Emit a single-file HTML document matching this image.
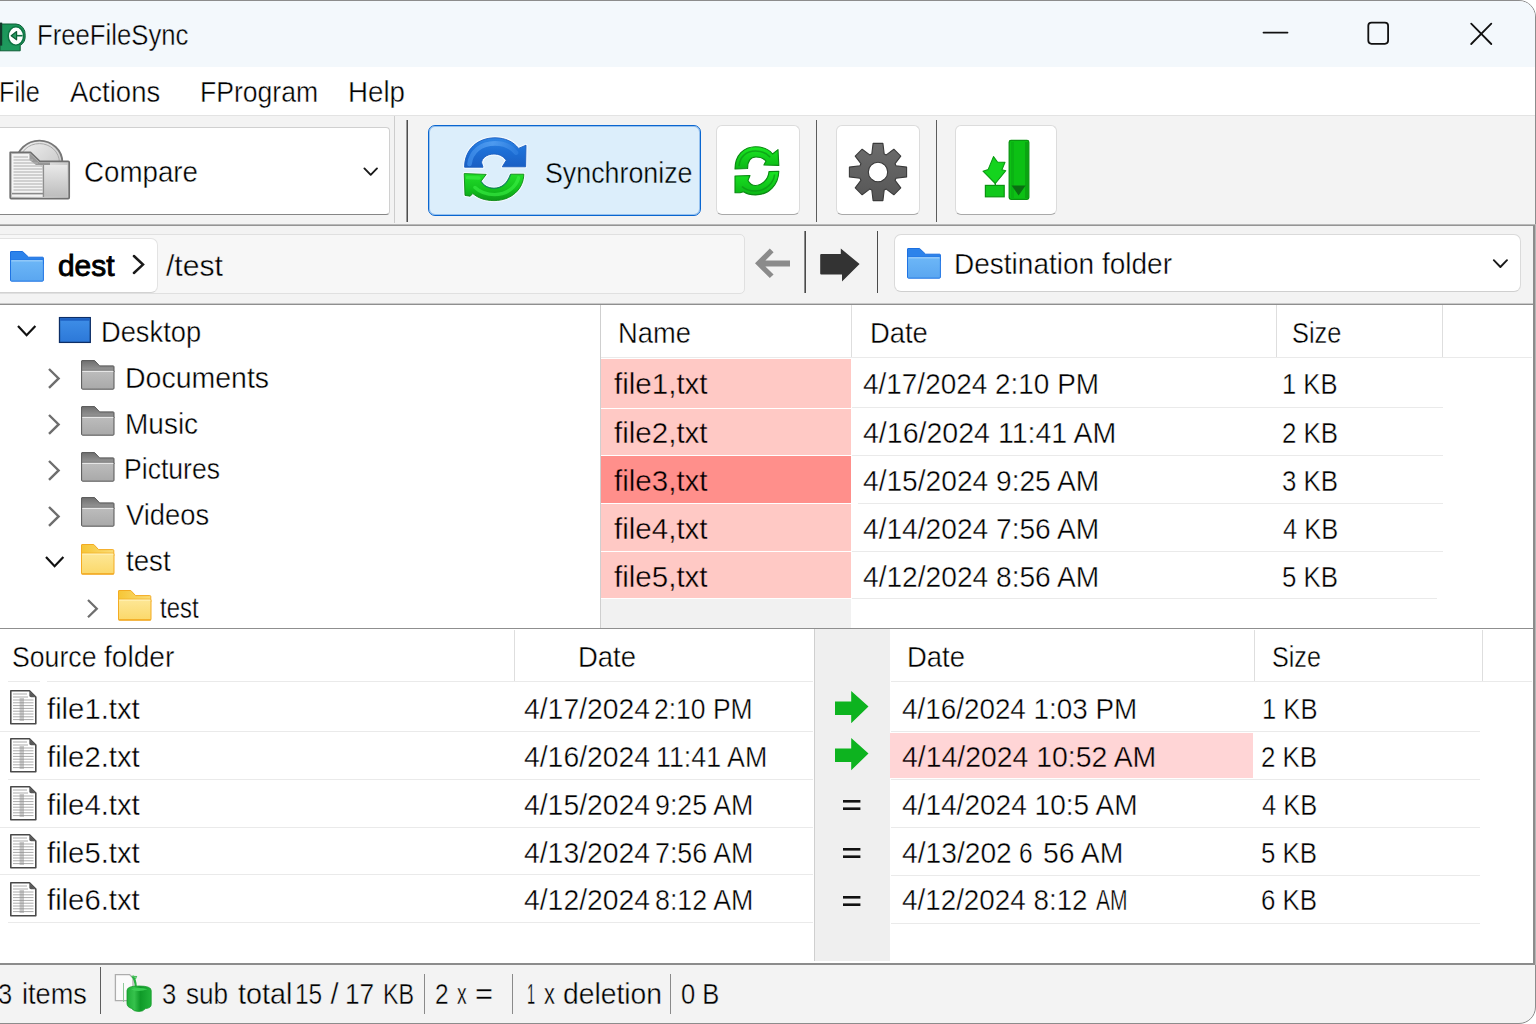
<!DOCTYPE html>
<html><head><meta charset="utf-8"><title>FreeFileSync</title>
<style>
html,body{margin:0;padding:0;}
body{width:1536px;height:1024px;overflow:hidden;position:relative;background:#fff;font-family:"Liberation Sans",sans-serif;color:#000;}
.a{position:absolute;}
.t{position:absolute;white-space:pre;line-height:1;transform-origin:0 0;font-family:"Liberation Sans",sans-serif;}
svg{position:absolute;overflow:visible;}
#win{left:-20px;top:0;width:1554px;height:1022px;border:1px solid #8c8c8c;border-radius:0 17px 17px 0;background:#f3f3f3;overflow:hidden;}
.btn{background:#fff;border:1px solid #dcdcdc;border-bottom-color:#a9a9a9;border-radius:6px;box-sizing:border-box;}
.hl{height:1px;background:#eaeaea;}
.vl{width:1px;background:#dedede;}

</style></head>
<body>
<div class="a" id="win"></div>
<!-- title bar -->
<div class="a" style="left:0;top:1px;width:1535px;height:66px;background:#f3f8fc;border-radius:0 16px 0 0;"></div>
<!-- app icon -->
<svg style="left:0;top:20px" width="30" height="34" viewBox="0 20 30 34">
  <defs><linearGradient id="gApp" x1="0" y1="0" x2="0" y2="1"><stop offset="0" stop-color="#1a9458"/><stop offset="1" stop-color="#1f9a5e"/></linearGradient></defs>
  <path d="M0 24 H16 A9.4 10.6 0 0 1 25.2 35.4 A9.4 10.6 0 0 1 20.2 45.4 V50.8 H0 Z" fill="url(#gApp)" stroke="#0c5c34" stroke-width="1"/>
  <rect x="0" y="22.6" width="2.2" height="23" fill="#12382a"/>
  <ellipse cx="15.9" cy="36" rx="7.7" ry="9.2" fill="#fff" stroke="#0e7443" stroke-width="1.5"/>
  <path d="M11.2 35.7 L16.6 31.6 V39.8 Z" fill="#2a9a62" stroke="#0c5c34" stroke-width="1.2" stroke-linejoin="round"/>
  <line x1="16.6" y1="35.7" x2="22.6" y2="35.7" stroke="#0e6e40" stroke-width="1.6"/>
</svg>
<!-- window controls -->
<svg style="left:1250px;top:10px" width="260" height="50" viewBox="1250 10 260 50" fill="none" stroke="#111" stroke-width="1.8" stroke-linecap="round">
  <line x1="1263.5" y1="32.6" x2="1287.5" y2="32.6"/>
  <rect x="1368.3" y="22.6" width="19.8" height="21.2" rx="3.2"/>
  <line x1="1471.2" y1="23.6" x2="1491.3" y2="44"/>
  <line x1="1491.3" y1="23.6" x2="1471.2" y2="44"/>
</svg>
<!-- menu bar -->
<div class="a" style="left:0;top:67px;width:1535px;height:48px;background:#fff;"></div>
<div class="a" style="left:0;top:115px;width:1535px;height:1px;background:#e3e3e3;"></div>
<!-- toolbar -->
<div class="a" style="left:0;top:116px;width:1535px;height:108px;background:#f3f3f3;"></div>
<div class="a" style="left:0;top:224px;width:1536px;height:1px;background:#b9b9b9;"></div>
<div class="a" style="left:0;top:225px;width:1536px;height:1px;background:#949494;"></div>
<!-- compare button -->
<div class="a btn" style="left:-8px;top:127px;width:398px;height:88px;border-color:#d0d0d0;border-bottom-color:#868686;border-radius:4px;"></div>
<svg style="left:360px;top:164px" width="22" height="16" viewBox="360 164 22 16" fill="none" stroke="#1a1a1a" stroke-width="1.9" stroke-linecap="round" stroke-linejoin="round"><path d="M364.4 168.4 L370.7 174.8 L377 168.4"/></svg>
<!-- separators -->
<div class="a" style="left:394px;top:116px;width:1px;height:107px;background:#cdcdcd;"></div>
<div class="a" style="left:406px;top:120px;width:1px;height:102px;background:#9a9a9a;"></div><div class="a" style="left:407px;top:120px;width:1px;height:102px;background:#4e4e4e;"></div>
<!-- synchronize button -->
<div class="a" style="left:428px;top:125px;width:273px;height:91px;box-sizing:border-box;border:1px solid #0a66d0;border-radius:7px;background:#dceefb;box-shadow:inset 0 0 0 1px rgba(20,110,215,.35);"></div>
<!-- refresh / gear / green buttons -->
<div class="a btn" style="left:716px;top:125px;width:84px;height:90px;"></div>
<div class="a" style="left:816px;top:120px;width:1px;height:102px;background:#5c5c5c;"></div>
<div class="a btn" style="left:836px;top:125px;width:84px;height:90px;"></div>
<div class="a" style="left:936px;top:120px;width:1px;height:102px;background:#5c5c5c;"></div>
<div class="a btn" style="left:955px;top:125px;width:102px;height:90px;"></div>
<!-- address bar -->
<div class="a" style="left:0;top:226px;width:1533px;height:78px;background:#f3f3f3;"></div>
<div class="a" style="left:0;top:303px;width:1533px;height:1px;background:#c9c9c9;"></div>
<div class="a" style="left:0;top:304px;width:1533px;height:1px;background:#8f8f8f;"></div>
<div class="a" style="left:-8px;top:234px;width:753px;height:60px;box-sizing:border-box;border:1px solid #e0e0e0;border-radius:5px;background:#f7f7f7;"></div>
<div class="a" style="left:-8px;top:238px;width:166px;height:55px;box-sizing:border-box;border:1px solid #e3e3e3;border-bottom-color:#d2d2d2;border-radius:7px;background:#fff;"></div>
<svg style="left:128px;top:250px" width="22" height="30" viewBox="128 250 22 30" fill="none" stroke="#1a1a1a" stroke-width="2.5" stroke-linecap="round" stroke-linejoin="miter"><path d="M133.9 256 L143 264.6 L133.9 273"/></svg>
<div class="a" style="left:804px;top:231px;width:1px;height:62px;background:#8a8a8a;"></div><div class="a" style="left:805px;top:231px;width:1px;height:62px;background:#4a4a4a;"></div>
<div class="a" style="left:877px;top:231px;width:1px;height:62px;background:#4a4a4a;"></div>
<svg style="left:750px;top:244px" width="115" height="42" viewBox="750 244 115 42">
  <path d="M755 263.3 L769.8 248.6 L773.6 252.3 L765.4 260.4 H790 V266.4 H765.4 L773.6 274.4 L769.8 278.1 Z" fill="#8b8b8b"/>
  <path d="M821.2 254 H840.8 V248.6 L859.6 264 L842 281.6 V274.6 H821.2 Q820.2 274.6 820.2 273.6 V255 Q820.2 254 821.2 254 Z" fill="#333"/>
</svg>
<div class="a" style="left:894px;top:234px;width:627px;height:58px;box-sizing:border-box;border:1px solid #dadada;border-bottom-color:#cfcfcf;border-radius:7px;background:#fff;"></div>
<svg style="left:1488px;top:254px" width="26" height="20" viewBox="1488 254 26 20" fill="none" stroke="#1a1a1a" stroke-width="1.9" stroke-linecap="round" stroke-linejoin="round"><path d="M1493.8 260.2 L1500.4 267 L1507 260.2"/></svg>
<!-- top panels -->
<div class="a" style="left:0;top:305px;width:1533px;height:323px;background:#fff;"></div>
<div class="a" style="left:0;top:628px;width:1533px;height:1px;background:#8f8f8f;"></div>
<div class="a" style="left:600px;top:305px;width:1px;height:323px;background:#cfcfcf;"></div>
<!-- top list header -->
<div class="a hl" style="left:601px;top:357px;width:931px;"></div>
<div class="a vl" style="left:851px;top:305px;height:52px;"></div>
<div class="a vl" style="left:1276px;top:305px;height:52px;"></div>
<div class="a vl" style="left:1442px;top:305px;height:52px;"></div>
<!-- pink rows -->
<div class="a" style="left:601px;top:359px;width:250px;height:49px;background:#ffc9c5;"></div>
<div class="a" style="left:601px;top:409px;width:250px;height:46px;background:#ffc9c5;"></div>
<div class="a" style="left:601px;top:456px;width:250px;height:47px;background:#ff8f8b;"></div>
<div class="a" style="left:601px;top:504px;width:250px;height:47px;background:#ffc9c5;"></div>
<div class="a" style="left:601px;top:552px;width:250px;height:46px;background:#ffc9c5;"></div>
<div class="a" style="left:601px;top:599px;width:250px;height:29px;background:#f1f1f1;"></div>
<!-- top row lines -->
<div class="a hl" style="left:852px;top:407px;width:591px;"></div>
<div class="a hl" style="left:852px;top:455px;width:591px;"></div>
<div class="a hl" style="left:858px;top:503px;width:585px;"></div>
<div class="a hl" style="left:852px;top:551px;width:591px;"></div>
<div class="a hl" style="left:852px;top:598px;width:585px;"></div>
<!-- bottom panels -->
<div class="a" style="left:0;top:629px;width:1533px;height:334px;background:#fff;"></div>
<div class="a" style="left:0;top:963px;width:1535px;height:2px;background:#8c8c8c;"></div>
<div class="a hl" style="left:8px;top:681px;width:32px;"></div>
<div class="a hl" style="left:47px;top:681px;width:766px;"></div>
<div class="a hl" style="left:891px;top:681px;width:641px;"></div>
<div class="a vl" style="left:514px;top:630px;height:51px;"></div>
<div class="a vl" style="left:1254px;top:630px;height:51px;"></div>
<div class="a vl" style="left:1482px;top:630px;height:51px;"></div>
<!-- middle column -->
<div class="a" style="left:814px;top:629px;width:76px;height:332px;background:#efefef;border-left:1px solid #cfcfcf;box-sizing:border-box;"></div>
<!-- bottom row lines -->
<div class="a hl" style="left:0;top:731px;width:813px;"></div>
<div class="a hl" style="left:8px;top:779px;width:805px;"></div>
<div class="a hl" style="left:0;top:827px;width:813px;"></div>
<div class="a hl" style="left:0;top:874px;width:813px;"></div>
<div class="a hl" style="left:8px;top:922px;width:805px;"></div>
<div class="a hl" style="left:891px;top:731px;width:589px;"></div>
<div class="a hl" style="left:891px;top:779px;width:589px;"></div>
<div class="a hl" style="left:891px;top:827px;width:589px;"></div>
<div class="a hl" style="left:891px;top:875px;width:589px;"></div>
<div class="a hl" style="left:891px;top:923px;width:589px;"></div>
<!-- pink highlight -->
<div class="a" style="left:890px;top:733px;width:363px;height:45px;background:#ffd5d6;"></div>
<!-- panel right border -->
<div class="a" style="left:1533px;top:225px;width:2px;height:740px;background:#8c8c8c;"></div>
<div class="a" style="left:1535px;top:225px;width:1px;height:740px;background:#b5b5b5;"></div>
<!-- status separators -->
<div class="a" style="left:100px;top:967px;width:1px;height:47px;background:#5e5e5e;"></div>
<div class="a" style="left:424px;top:974px;width:1px;height:40px;background:#8a8a8a;"></div>
<div class="a" style="left:512px;top:974px;width:1px;height:40px;background:#8a8a8a;"></div>
<div class="a" style="left:670px;top:974px;width:1px;height:40px;background:#8a8a8a;"></div>
<svg width="0" height="0" style="left:0;top:0">
<defs>
  <linearGradient id="gGrayV" x1="0" y1="0" x2="0" y2="1"><stop offset="0" stop-color="#e9e9e9"/><stop offset="1" stop-color="#bdbdbd"/></linearGradient>
  <linearGradient id="gGrayH" x1="0" y1="0" x2="1" y2="0"><stop offset="0" stop-color="#c4c4c4"/><stop offset=".6" stop-color="#dedede"/><stop offset="1" stop-color="#c9c9c9"/></linearGradient>
  <linearGradient id="gDome" x1="0" y1="0" x2="1" y2="1"><stop offset="0" stop-color="#f4f4f4"/><stop offset="1" stop-color="#bdbdbd"/></linearGradient>
  <linearGradient id="gBlueA" x1="0" y1="0" x2="0" y2="1"><stop offset="0" stop-color="#2f86e6"/><stop offset=".45" stop-color="#1d6fd6"/><stop offset="1" stop-color="#1a5fc4"/></linearGradient>
  <linearGradient id="gGreenA" x1="0" y1="0" x2="0" y2="1"><stop offset="0" stop-color="#22dd2a"/><stop offset=".55" stop-color="#14c41e"/><stop offset="1" stop-color="#0d9a18"/></linearGradient>
  <linearGradient id="gGreenB" x1="0" y1="0" x2="0" y2="1"><stop offset="0" stop-color="#1ae622"/><stop offset="1" stop-color="#0cb616"/></linearGradient>
  <linearGradient id="gGear" x1="0" y1="0" x2="0" y2="1"><stop offset="0" stop-color="#6c6c6c"/><stop offset="1" stop-color="#565656"/></linearGradient>
  <linearGradient id="gFoldBlue" x1="0" y1="0" x2="0" y2="1"><stop offset="0" stop-color="#6db7f7"/><stop offset="1" stop-color="#5aa6f0"/></linearGradient>
  <linearGradient id="gDesk" x1="0" y1="0" x2="0" y2="1"><stop offset="0" stop-color="#3f8fe8"/><stop offset="1" stop-color="#2c78d8"/></linearGradient>
  <linearGradient id="gFoldGrayBack" x1="0" y1="0" x2="0" y2="1"><stop offset="0" stop-color="#6f6f6f"/><stop offset="1" stop-color="#9c9c9c"/></linearGradient>
  <linearGradient id="gFoldGray" x1="0" y1="0" x2="0" y2="1"><stop offset="0" stop-color="#bdbdbd"/><stop offset="1" stop-color="#a9a9a9"/></linearGradient>
  <linearGradient id="gYelBack" x1="0" y1="0" x2="1" y2="0"><stop offset="0" stop-color="#f6c636"/><stop offset="1" stop-color="#fbdd78"/></linearGradient>
  <linearGradient id="gFoldYel" x1="0" y1="0" x2="0" y2="1"><stop offset="0" stop-color="#fde796"/><stop offset="1" stop-color="#fbd86a"/></linearGradient>
  <linearGradient id="gCube" x1="0" y1="0" x2="1" y2="0"><stop offset="0" stop-color="#1fae38"/><stop offset=".3" stop-color="#36c24c"/><stop offset=".55" stop-color="#0f9a28"/><stop offset="1" stop-color="#22b23a"/></linearGradient>

  <!-- gray folder 34x30 at origin -->
  <g id="fgray">
    <path d="M1 .6 H13.6 L18.6 5.9 H32.2 Q33 5.9 33 6.7 V12 H.6 V1 Q.6 .6 1 .6 Z" fill="url(#gFoldGrayBack)" stroke="#555" stroke-width="1"/>
    <rect x=".6" y="10.4" width="32.4" height="18.8" rx="1" fill="url(#gFoldGray)" stroke="#555" stroke-width="1"/>
    <rect x="1.3" y="10.6" width="31" height="1.4" fill="#e6e6e6"/>
  </g>
  <!-- yellow folder 34x31 -->
  <g id="fyel">
    <path d="M1 .5 H12.8 L17.6 5.6 H31.8 Q32.8 5.6 32.8 6.6 V12 H.5 V1 Q.5 .5 1 .5 Z" fill="url(#gYelBack)" stroke="#f3ab22" stroke-width="1"/>
    <rect x=".5" y="9.2" width="32.5" height="20.9" rx="1" fill="url(#gFoldYel)" stroke="#f3ab22" stroke-width="1"/>
    <rect x="1.2" y="9.5" width="31.1" height="1.3" fill="#fff1b4"/>
    <rect x=".6" y="29.4" width="32.3" height="1.1" fill="#f0a216"/>
  </g>
  <!-- blue folder 34x31 -->
  <g id="fblue">
    <path d="M1 .5 H12.6 L18.6 6.2 H32.6 Q33.4 6.2 33.4 7 V13 H.5 V1 Q.5 .5 1 .5 Z" fill="#2d83ea" stroke="#1b6fe0" stroke-width="1"/>
    <rect x=".5" y="8.8" width="32.9" height="21.4" rx="1" fill="url(#gFoldBlue)" stroke="#1f74e4" stroke-width="1"/>
    <rect x="1.3" y="9.2" width="31.3" height="1.2" fill="#9fd0fb"/>
  </g>
  <!-- doc icon 27x35 -->
  <g id="doc">
    <path d="M.8 .8 H19.5 L25.8 7 V33.8 H.8 Z" fill="#fff" stroke="#4a4a4a" stroke-width="1.6" stroke-linejoin="round"/>
    <path d="M19.3 .9 L25.8 7.2 H21 Q19.3 7.2 19.3 5.6 Z" fill="#5a5a5a"/>
    <g stroke="#ababab" stroke-width="1">
      <line x1="3" y1="4" x2="17" y2="4"/><line x1="3" y1="7" x2="18" y2="7"/><line x1="3" y1="10" x2="23.5" y2="10"/><line x1="3" y1="12.8" x2="23.5" y2="12.8"/>
      <line x1="3" y1="15.6" x2="23.5" y2="15.6"/><line x1="3" y1="18.4" x2="23.5" y2="18.4"/><line x1="3" y1="21.2" x2="23.5" y2="21.2"/><line x1="3" y1="24" x2="23.5" y2="24"/>
      <line x1="3" y1="26.8" x2="23.5" y2="26.8"/><line x1="3" y1="29.6" x2="23.5" y2="29.6"/>
    </g>
    <rect x="9.6" y="8" width="4.4" height="23" fill="#8a8a8a" opacity=".45"/>
  </g>
  <!-- chevrons -->
  <path id="chR" d="M0 0 L9.6 9.4 L0 18.8" fill="none" stroke="#6e6e6e" stroke-width="2.4" stroke-linejoin="miter"/>
  <path id="chD" d="M0 0 L8.6 9.2 L17.4 0" fill="none" stroke="#111" stroke-width="2.2" stroke-linejoin="miter"/>
  <!-- green arrow 34x32 -->
  <path id="garr" d="M0 10.5 H16.2 V0 L33.5 15.6 L16.2 32.2 V24 H0 Z" fill="#0db31f"/>
  <g id="eq"><rect x="0" y="0" width="17.4" height="2.6" fill="#111"/><rect x="0" y="7.4" width="17.4" height="2.6" fill="#111"/></g>
</defs>
</svg>

<!-- Compare icon -->
<svg style="left:6px;top:136px" width="70" height="68" viewBox="6 136 70 68">
  <ellipse cx="39.4" cy="162.4" rx="23" ry="21.8" fill="url(#gDome)" stroke="#777" stroke-width="1.8"/>
  <ellipse cx="39.4" cy="162.4" rx="20" ry="18.8" fill="none" stroke="#a8a8a8" stroke-width="1"/>
  <path d="M10.2 152.4 H30.5 L39.8 161.4 H68.2 Q69.2 161.4 69.2 162.4 V197.6 Q69.2 198.6 68.2 198.6 H11.2 Q10.2 198.6 10.2 197.6 Z" fill="url(#gGrayH)" stroke="#707070" stroke-width="1.7" stroke-linejoin="round"/>
  <path d="M12 154 H29 L35 160 L38 163.5 Q43 166 43 172 V196.8 H12 Z" fill="#f4f4f4"/>
  <path d="M29.5 153.2 L39.2 162.4 H50 V165 H36 L29.5 160 Z" fill="#8a8a8a" opacity=".85"/>
  <path d="M43.6 165 H67.4 V196.8 H43.6 Z" fill="url(#gGrayV)"/>
  <g stroke="#b3b3b3" stroke-width="1.1">
    <line x1="13.5" y1="157" x2="28" y2="157"/><line x1="13.5" y1="160" x2="33" y2="160"/><line x1="13.5" y1="163" x2="38" y2="163"/><line x1="13.5" y1="166" x2="42" y2="166"/>
    <line x1="13.5" y1="169" x2="42.5" y2="169"/><line x1="13.5" y1="172" x2="42.5" y2="172"/><line x1="13.5" y1="175" x2="42.5" y2="175"/><line x1="13.5" y1="178" x2="42.5" y2="178"/>
    <line x1="13.5" y1="181" x2="42.5" y2="181"/><line x1="13.5" y1="184" x2="42.5" y2="184"/><line x1="13.5" y1="187" x2="42.5" y2="187"/><line x1="13.5" y1="190" x2="42.5" y2="190"/>
  </g>
  <line x1="12" y1="193.6" x2="43" y2="193.6" stroke="#8a8a8a" stroke-width="1.6"/>
  <line x1="43.4" y1="165" x2="43.4" y2="197" stroke="#8f8f8f" stroke-width="1.4"/>
</svg>

<!-- Synchronize icon -->
<svg style="left:450px;top:125px" width="96" height="90" viewBox="0 0 96 90">
  <defs>
    <path id="sBlue" d="M14.6 42.2 C14.6 24 28 12.8 45 12.8 C55.5 12.8 63.5 17 68.6 23.4 L76 20.2 L75.6 41.8 H52.3 L56.3 35.2 C53 31 49 29 44 29 C36.5 29 31.6 33.5 31.6 37.8 L33 42.2 Z"/>
    <path id="sGreen" d="M14.2 48.6 L36.2 49.4 L31 56.3 C33.5 60.5 38 63.3 44 63.3 C52 63.3 57.6 58 60.6 49.2 H73.8 C73.6 64 61.5 75.6 44 75.6 C35 75.6 28 73 22.8 68.5 L20.2 71.2 L15 70.4 Z"/>
    <linearGradient id="gBlueHi" x1="0" y1="0" x2="1" y2="0"><stop offset="0" stop-color="#3f8eea"/><stop offset=".5" stop-color="#5aa4f4"/><stop offset="1" stop-color="#2f7fe0"/></linearGradient>
  </defs>
  <use href="#sBlue" fill="none" stroke="#f4faff" stroke-width="3" stroke-linejoin="round"/>
  <use href="#sGreen" fill="none" stroke="#f4faff" stroke-width="3" stroke-linejoin="round"/>
  <use href="#sBlue" fill="url(#gBlueA)" stroke="#1a5ec0" stroke-width=".9" stroke-linejoin="round"/>
  <path d="M19.5 39 C21 26.5 31 18.4 45 18.4 C54 18.4 61.5 22 66 27.6" fill="none" stroke="url(#gBlueHi)" stroke-width="4.6" opacity=".75" stroke-linecap="round"/>
  <use href="#sGreen" fill="url(#gGreenA)" stroke="#0c8a16" stroke-width=".9" stroke-linejoin="round"/>
  <path d="M17.5 52.6 L29 53 M25 62.5 C30.5 67.6 37 69.6 44.5 69.6 C57 69.6 66.2 62 68.6 52.8" fill="none" stroke="#3cf046" stroke-width="3.4" opacity=".6" stroke-linecap="round"/>
  <path d="M31 56.3 C33.5 60.5 38 63.3 44 63.3 C52 63.3 57.6 58 60.6 49.2" fill="none" stroke="#0a7a8a" stroke-width="1.2" opacity=".55"/>
</svg>

<!-- Refresh icon -->
<svg style="left:712px;top:125px" width="96" height="90" viewBox="0 0 96 90">
  <path d="M23 44 C23 30 32 21.8 43.5 21.8 C51 21.8 57 24.6 60.6 29 L66 24.6 L66.8 40.4 L51.9 40 L54 36 C51.6 33.2 48 32 44 32 C38.6 32 35.6 36.5 35.6 43.5 Z" fill="url(#gGreenB)" stroke="#0a8a12" stroke-width="1.1" stroke-linejoin="round"/>
  <path d="M27 41 C28 31.5 34.5 26 43.5 26 C50 26 55 28.4 58.2 32.2" fill="none" stroke="#0c9416" stroke-width="1.6" opacity=".7"/>
  <path d="M23 51 L38 50.5 L36 55.4 C37.6 58.6 40 60.5 43.5 60.5 C49.5 60.5 56.4 55 57 46.6 L66.8 46.2 C66.6 59.5 57 69.9 43.5 69.9 C38.5 69.9 34.6 68.8 31.6 66.8 L28 67.7 H23 Z" fill="url(#gGreenB)" stroke="#0a8a12" stroke-width="1.1" stroke-linejoin="round"/>
  <path d="M30 61.5 C33.5 65 38 66 43.5 66 C54 66 61.6 58 62.6 49.5" fill="none" stroke="#0c9416" stroke-width="1.6" opacity=".7"/>
</svg>

<!-- Gear icon -->
<svg style="left:844.2px;top:137.6px" width="68" height="68" viewBox="-34 -34 68 68">
  <path fill="url(#gGear)" stroke="#3a3a3a" stroke-width="1.1" stroke-linejoin="round" fill-rule="evenodd" d="M-6.20 -17.96 L-4.90 -28.60 L4.90 -28.60 L6.20 -17.96 A19.0 19.0 0 0 1 8.32 -17.08 L15.84 -22.77 L22.77 -15.84 L17.08 -8.32 A19.0 19.0 0 0 1 17.96 -6.20 L28.60 -4.90 L28.60 4.90 L17.96 6.20 A19.0 19.0 0 0 1 17.08 8.32 L22.77 15.84 L15.84 22.77 L8.32 17.08 A19.0 19.0 0 0 1 6.20 17.96 L4.90 28.60 L-4.90 28.60 L-6.20 17.96 A19.0 19.0 0 0 1 -8.32 17.08 L-15.84 22.77 L-22.77 15.84 L-17.08 8.32 A19.0 19.0 0 0 1 -17.96 6.20 L-28.60 4.90 L-28.60 -4.90 L-17.96 -6.20 A19.0 19.0 0 0 1 -17.08 -8.32 L-22.77 -15.84 L-15.84 -22.77 L-8.32 -17.08 A19.0 19.0 0 0 1 -6.20 -17.96 Z M9.7 0 A9.7 9.7 0 1 0 -9.7 0 A9.7 9.7 0 1 0 9.7 0 Z"/>
</svg>

<!-- Green bar icon -->
<svg style="left:950px;top:125px" width="112" height="90" viewBox="0 0 112 90">
  <rect x="59.2" y="15.4" width="19.6" height="59" rx="1.8" fill="#0cc014" stroke="#0a9410" stroke-width="1.3"/>
  <rect x="61" y="17" width="3" height="56" fill="#0aa812" opacity=".6"/>
  <rect x="75" y="17" width="3" height="56" fill="#0a9a10" opacity=".7"/>
  <path d="M61.6 60.6 H75.6 L68.6 70.4 Z" fill="#0a6e12"/>
  <rect x="35.4" y="60.4" width="18.8" height="11.4" fill="#12c81c" stroke="#0a9410" stroke-width="1.2"/>
  <path d="M43.5 31.6 L47.5 37 L55 37.4 L51.9 44.8 L55.8 45.7 L45.3 58.5 L33 46.2 L38.2 44.4 Z" fill="#14d41e" stroke="#0a9a12" stroke-width="1.1" stroke-linejoin="round"/>
  <line x1="45.3" y1="58" x2="45.3" y2="61" stroke="#0a9a12" stroke-width="1.4"/>
</svg>

<!-- blue folders -->
<svg style="left:9.6px;top:250.6px" width="34" height="31" viewBox="0 0 34 31"><use href="#fblue"/></svg>
<svg style="left:907px;top:247.8px" width="34" height="31" viewBox="0 0 34 31"><use href="#fblue"/></svg>

<!-- Desktop icon -->
<svg style="left:58px;top:316px" width="34" height="28" viewBox="58 316 34 28">
  <rect x="59.5" y="317.6" width="30.8" height="24.8" fill="url(#gDesk)" stroke="#0d2e66" stroke-width="1.3"/>
  <rect x="60.2" y="318.3" width="29.4" height="2.4" fill="#1d5fc0"/>
</svg>

<!-- tree chevrons -->
<svg style="left:17.6px;top:325.6px" width="18" height="11"><use href="#chD"/></svg>
<svg style="left:48.6px;top:369.4px" width="11" height="20"><use href="#chR"/></svg>
<svg style="left:48.6px;top:415.2px" width="11" height="20"><use href="#chR"/></svg>
<svg style="left:48.6px;top:461px" width="11" height="20"><use href="#chR"/></svg>
<svg style="left:48.6px;top:506.8px" width="11" height="20"><use href="#chR"/></svg>
<svg style="left:46px;top:556.6px" width="18" height="11"><use href="#chD"/></svg>
<svg style="left:88px;top:600.2px" width="11" height="20"><use href="#chR" stroke="#8a8a8a" transform="scale(.92)"/></svg>

<!-- gray folders -->
<svg style="left:80.6px;top:360px" width="34" height="30"><use href="#fgray"/></svg>
<svg style="left:80.6px;top:405.8px" width="34" height="30"><use href="#fgray"/></svg>
<svg style="left:80.6px;top:451.6px" width="34" height="30"><use href="#fgray"/></svg>
<svg style="left:80.6px;top:497.4px" width="34" height="30"><use href="#fgray"/></svg>
<!-- yellow folders -->
<svg style="left:80.6px;top:543.6px" width="34" height="31"><use href="#fyel"/></svg>
<svg style="left:118px;top:590px" width="34" height="31"><use href="#fyel"/></svg>

<!-- doc icons -->
<svg style="left:10px;top:690px" width="27" height="35"><use href="#doc"/></svg>
<svg style="left:10px;top:738px" width="27" height="35"><use href="#doc"/></svg>
<svg style="left:10px;top:786px" width="27" height="35"><use href="#doc"/></svg>
<svg style="left:10px;top:834px" width="27" height="35"><use href="#doc"/></svg>
<svg style="left:10px;top:882px" width="27" height="35"><use href="#doc"/></svg>

<!-- green arrows / equals -->
<svg style="left:835px;top:690.7px" width="34" height="33"><use href="#garr"/></svg>
<svg style="left:835px;top:738.3px" width="34" height="33"><use href="#garr"/></svg>
<svg style="left:843px;top:800.2px" width="18" height="11"><use href="#eq"/></svg>
<svg style="left:843px;top:848.2px" width="18" height="11"><use href="#eq"/></svg>
<svg style="left:843px;top:896.2px" width="18" height="11"><use href="#eq"/></svg>

<!-- status icon -->
<svg style="left:112px;top:970px" width="44" height="46" viewBox="112 970 44 46">
  <path d="M115.4 974.6 H129.6 L133 978 V1000.6 H115.4 Z" fill="#fbfbfb" stroke="#adadad" stroke-width="1.3"/>
  <path d="M123.5 983 V1002" stroke="#8fc99a" stroke-width="1" fill="none"/>
  <path d="M132.4 976 Q135.6 980 135.8 987" fill="none" stroke="#27b03e" stroke-width="2.2"/>
  <path d="M131.5 976.4 L136.4 976.6 L135.4 979" fill="none" stroke="#4cc060" stroke-width="1.2"/>
  <path d="M127 990.5 Q127 986 138.8 986 Q151.2 986 151.2 990.5 V1004.5 Q151.2 1008 145.5 1008.6 Q143 1011.6 138.8 1011.4 Q134 1011.6 131.5 1008.4 Q127 1007 127 1003.5 Z" fill="url(#gCube)" stroke="#139a2a" stroke-width=".8"/>
  <path d="M131 989.4 Q138.5 986.8 147.5 989.2 Q139 992.6 131 989.4 Z" fill="#3fd058" opacity=".9"/>
</svg>


<!-- text -->
<span class="t" style="left:37.03px;top:20.70px;font-size:29px;transform:scaleX(0.8864);-webkit-text-stroke:0.4px #f3f8fc;">FreeFileSync</span>
<span class="t" style="left:-1.04px;top:77.70px;font-size:29px;transform:scaleX(0.8716);-webkit-text-stroke:0.4px #fff;">File</span>
<span class="t" style="left:70.30px;top:77.70px;font-size:29px;transform:scaleX(0.9482);-webkit-text-stroke:0.4px #fff;">Actions</span>
<span class="t" style="left:200.17px;top:77.70px;font-size:29px;transform:scaleX(0.9161);-webkit-text-stroke:0.4px #fff;">FProgram</span>
<span class="t" style="left:348.09px;top:77.70px;font-size:29px;transform:scaleX(0.9555);-webkit-text-stroke:0.4px #fff;">Help</span>
<span class="t" style="left:84.34px;top:157.70px;font-size:29px;transform:scaleX(0.9552);-webkit-text-stroke:0.4px #fff;">Compare</span>
<span class="t" style="left:545.48px;top:158.70px;font-size:29px;transform:scaleX(0.9241);-webkit-text-stroke:0.4px #dceefb;">Synchronize</span>
<span class="t" style="left:58.07px;top:251.70px;font-size:29px;transform:scaleX(1.0306);-webkit-text-stroke:0.85px #000;">dest</span>
<span class="t" style="left:165.70px;top:251.70px;font-size:29px;transform:scaleX(1.0394);-webkit-text-stroke:0.4px #f7f7f7;">/test</span>
<span class="t" style="left:953.57px;top:249.70px;font-size:29px;transform:scaleX(0.9660);-webkit-text-stroke:0.4px #fff;">Destination folder</span>
<span class="t" style="left:100.92px;top:317.70px;font-size:29px;transform:scaleX(0.9404);-webkit-text-stroke:0.4px #fff;">Desktop</span>
<span class="t" style="left:124.74px;top:363.70px;font-size:29px;transform:scaleX(0.9822);-webkit-text-stroke:0.4px #fff;">Documents</span>
<span class="t" style="left:124.87px;top:409.70px;font-size:29px;transform:scaleX(0.9655);-webkit-text-stroke:0.4px #fff;">Music</span>
<span class="t" style="left:124.47px;top:454.70px;font-size:29px;transform:scaleX(0.9163);-webkit-text-stroke:0.4px #fff;">Pictures</span>
<span class="t" style="left:125.50px;top:500.70px;font-size:29px;transform:scaleX(0.9436);-webkit-text-stroke:0.4px #fff;">Videos</span>
<span class="t" style="left:125.80px;top:546.70px;font-size:29px;transform:scaleX(0.9553);-webkit-text-stroke:0.4px #fff;">test</span>
<span class="t" style="left:160.00px;top:593.70px;font-size:29px;transform:scaleX(0.8247);-webkit-text-stroke:0.4px #fff;">test</span>
<span class="t" style="left:618.42px;top:318.70px;font-size:29px;transform:scaleX(0.9417);-webkit-text-stroke:0.4px #fff;">Name</span>
<span class="t" style="left:870.01px;top:318.70px;font-size:29px;transform:scaleX(0.9445);-webkit-text-stroke:0.4px #fff;">Date</span>
<span class="t" style="left:1291.62px;top:318.70px;font-size:29px;transform:scaleX(0.8750);-webkit-text-stroke:0.4px #fff;">Size</span>
<span class="t" style="left:613.50px;top:369.70px;font-size:29px;transform:scaleX(1.0184);-webkit-text-stroke:0.4px #ffc9c5;">file1,txt</span>
<span class="t" style="left:863.00px;top:369.70px;font-size:29px;transform:scaleX(0.9633);-webkit-text-stroke:0.4px #fff;">4/17/2024 2:10 PM</span>
<span class="t" style="left:1282.24px;top:369.70px;font-size:29px;transform:scaleX(0.8819);-webkit-text-stroke:0.4px #fff;">1 KB</span>
<span class="t" style="left:613.50px;top:418.70px;font-size:29px;transform:scaleX(1.0184);-webkit-text-stroke:0.4px #ffc9c5;">file2,txt</span>
<span class="t" style="left:863.00px;top:418.70px;font-size:29px;transform:scaleX(0.9841);-webkit-text-stroke:0.4px #fff;">4/16/2024 11:41 AM</span>
<span class="t" style="left:1281.61px;top:418.70px;font-size:29px;transform:scaleX(0.8921);-webkit-text-stroke:0.4px #fff;">2 KB</span>
<span class="t" style="left:613.50px;top:466.70px;font-size:29px;transform:scaleX(1.0184);-webkit-text-stroke:0.4px #ff8f8b;">file3,txt</span>
<span class="t" style="left:863.00px;top:466.70px;font-size:29px;transform:scaleX(0.9703);-webkit-text-stroke:0.4px #fff;">4/15/2024 9:25 AM</span>
<span class="t" style="left:1281.61px;top:466.70px;font-size:29px;transform:scaleX(0.8921);-webkit-text-stroke:0.4px #fff;">3 KB</span>
<span class="t" style="left:613.50px;top:514.70px;font-size:29px;transform:scaleX(1.0184);-webkit-text-stroke:0.4px #ffc9c5;">file4,txt</span>
<span class="t" style="left:863.00px;top:514.70px;font-size:29px;transform:scaleX(0.9703);-webkit-text-stroke:0.4px #fff;">4/14/2024 7:56 AM</span>
<span class="t" style="left:1282.50px;top:514.70px;font-size:29px;transform:scaleX(0.8776);-webkit-text-stroke:0.4px #fff;">4 KB</span>
<span class="t" style="left:613.50px;top:562.70px;font-size:29px;transform:scaleX(1.0184);-webkit-text-stroke:0.4px #ffc9c5;">file5,txt</span>
<span class="t" style="left:863.00px;top:562.70px;font-size:29px;transform:scaleX(0.9703);-webkit-text-stroke:0.4px #fff;">4/12/2024 8:56 AM</span>
<span class="t" style="left:1281.61px;top:562.70px;font-size:29px;transform:scaleX(0.8921);-webkit-text-stroke:0.4px #fff;">5 KB</span>
<span class="t" style="left:11.58px;top:642.70px;font-size:29px;transform:scaleX(0.9192);-webkit-text-stroke:0.4px #fff;">Source</span>
<span class="t" style="left:104.40px;top:642.70px;font-size:29px;transform:scaleX(0.9686);-webkit-text-stroke:0.4px #fff;">folder</span>
<span class="t" style="left:578.41px;top:642.70px;font-size:29px;transform:scaleX(0.9462);-webkit-text-stroke:0.4px #fff;">Date</span>
<span class="t" style="left:907.41px;top:642.70px;font-size:29px;transform:scaleX(0.9462);-webkit-text-stroke:0.4px #fff;">Date</span>
<span class="t" style="left:1271.63px;top:642.70px;font-size:29px;transform:scaleX(0.8658);-webkit-text-stroke:0.4px #fff;">Size</span>
<span class="t" style="left:46.60px;top:694.70px;font-size:29px;transform:scaleX(1.0086);-webkit-text-stroke:0.4px #fff;">file1.txt</span>
<span class="t" style="left:524.30px;top:694.70px;font-size:29px;transform:scaleX(0.9768);-webkit-text-stroke:0.4px #fff;">4/17/2024</span>
<span class="t" style="left:653.99px;top:694.70px;font-size:29px;transform:scaleX(0.9128);-webkit-text-stroke:0.4px #fff;">2:10 PM</span>
<span class="t" style="left:46.60px;top:742.70px;font-size:29px;transform:scaleX(1.0086);-webkit-text-stroke:0.4px #fff;">file2.txt</span>
<span class="t" style="left:524.30px;top:742.70px;font-size:29px;transform:scaleX(0.9768);-webkit-text-stroke:0.4px #fff;">4/16/2024</span>
<span class="t" style="left:656.05px;top:742.70px;font-size:29px;transform:scaleX(0.9243);-webkit-text-stroke:0.4px #fff;">11:41 AM</span>
<span class="t" style="left:46.60px;top:790.70px;font-size:29px;transform:scaleX(1.0086);-webkit-text-stroke:0.4px #fff;">file4.txt</span>
<span class="t" style="left:524.30px;top:790.70px;font-size:29px;transform:scaleX(0.9768);-webkit-text-stroke:0.4px #fff;">4/15/2024</span>
<span class="t" style="left:655.18px;top:790.70px;font-size:29px;transform:scaleX(0.9242);-webkit-text-stroke:0.4px #fff;">9:25 AM</span>
<span class="t" style="left:46.60px;top:838.70px;font-size:29px;transform:scaleX(1.0086);-webkit-text-stroke:0.4px #fff;">file5.txt</span>
<span class="t" style="left:524.30px;top:838.70px;font-size:29px;transform:scaleX(0.9768);-webkit-text-stroke:0.4px #fff;">4/13/2024</span>
<span class="t" style="left:655.18px;top:838.70px;font-size:29px;transform:scaleX(0.9242);-webkit-text-stroke:0.4px #fff;">7:56 AM</span>
<span class="t" style="left:46.60px;top:885.70px;font-size:29px;transform:scaleX(1.0086);-webkit-text-stroke:0.4px #fff;">file6.txt</span>
<span class="t" style="left:524.30px;top:885.70px;font-size:29px;transform:scaleX(0.9768);-webkit-text-stroke:0.4px #fff;">4/12/2024</span>
<span class="t" style="left:655.18px;top:885.70px;font-size:29px;transform:scaleX(0.9242);-webkit-text-stroke:0.4px #fff;">8:12 AM</span>
<span class="t" style="left:902.30px;top:694.70px;font-size:29px;transform:scaleX(0.9600);-webkit-text-stroke:0.4px #fff;">4/16/2024 1:03 PM</span>
<span class="t" style="left:902.30px;top:742.70px;font-size:29px;transform:scaleX(0.9794);-webkit-text-stroke:0.4px #ffd5d6;">4/14/2024 10:52 AM</span>
<span class="t" style="left:902.30px;top:790.70px;font-size:29px;transform:scaleX(0.9674);-webkit-text-stroke:0.4px #fff;">4/14/2024 10:5 AM</span>
<span class="t" style="left:902.30px;top:838.70px;font-size:29px;transform:scaleX(0.9727);-webkit-text-stroke:0.4px #fff;">4/13/202</span>
<span class="t" style="left:1018.86px;top:838.70px;font-size:29px;transform:scaleX(0.8429);-webkit-text-stroke:0.4px #fff;">6</span>
<span class="t" style="left:1042.62px;top:838.70px;font-size:29px;transform:scaleX(0.9782);-webkit-text-stroke:0.4px #fff;">56 AM</span>
<span class="t" style="left:902.30px;top:885.70px;font-size:29px;transform:scaleX(0.9590);-webkit-text-stroke:0.4px #fff;">4/12/2024 8:12</span>
<span class="t" style="left:1095.50px;top:885.70px;font-size:29px;transform:scaleX(0.7256);-webkit-text-stroke:0.4px #fff;">AM</span>
<span class="t" style="left:1261.54px;top:694.70px;font-size:29px;transform:scaleX(0.8819);-webkit-text-stroke:0.4px #fff;">1 KB</span>
<span class="t" style="left:1260.91px;top:742.70px;font-size:29px;transform:scaleX(0.8921);-webkit-text-stroke:0.4px #fff;">2 KB</span>
<span class="t" style="left:1261.80px;top:790.70px;font-size:29px;transform:scaleX(0.8776);-webkit-text-stroke:0.4px #fff;">4 KB</span>
<span class="t" style="left:1260.91px;top:838.70px;font-size:29px;transform:scaleX(0.8921);-webkit-text-stroke:0.4px #fff;">5 KB</span>
<span class="t" style="left:1260.91px;top:885.70px;font-size:29px;transform:scaleX(0.8921);-webkit-text-stroke:0.4px #fff;">6 KB</span>
<span class="t" style="left:-2.38px;top:979.70px;font-size:29px;transform:scaleX(0.8786);-webkit-text-stroke:0.4px #f3f3f3;">3</span>
<span class="t" style="left:21.56px;top:979.70px;font-size:29px;transform:scaleX(0.9368);-webkit-text-stroke:0.4px #f3f3f3;">items</span>
<span class="t" style="left:162.21px;top:979.70px;font-size:29px;transform:scaleX(0.8857);-webkit-text-stroke:0.4px #f3f3f3;">3</span>
<span class="t" style="left:185.50px;top:979.70px;font-size:29px;transform:scaleX(0.9008);-webkit-text-stroke:0.4px #f3f3f3;">sub</span>
<span class="t" style="left:237.50px;top:979.70px;font-size:29px;transform:scaleX(0.9930);-webkit-text-stroke:0.4px #f3f3f3;">total</span>
<span class="t" style="left:295.01px;top:979.70px;font-size:29px;transform:scaleX(0.8445);-webkit-text-stroke:0.4px #f3f3f3;">15</span>
<span class="t" style="left:330.60px;top:979.70px;font-size:29px;transform:scaleX(1.0000);-webkit-text-stroke:0.4px #f3f3f3;">/</span>
<span class="t" style="left:345.09px;top:979.70px;font-size:29px;transform:scaleX(0.9063);-webkit-text-stroke:0.4px #f3f3f3;">17</span>
<span class="t" style="left:382.59px;top:979.70px;font-size:29px;transform:scaleX(0.8036);-webkit-text-stroke:0.4px #f3f3f3;">KB</span>
<span class="t" style="left:435.16px;top:979.70px;font-size:29px;transform:scaleX(0.8429);-webkit-text-stroke:0.4px #f3f3f3;">2</span>
<span class="t" style="left:456.50px;top:979.70px;font-size:29px;transform:scaleX(0.6667);-webkit-text-stroke:0.4px #f3f3f3;">x</span>
<span class="t" style="left:474.93px;top:979.70px;font-size:29px;transform:scaleX(1.0667);-webkit-text-stroke:0.4px #f3f3f3;">=</span>
<span class="t" style="left:526.50px;top:979.70px;font-size:29px;transform:scaleX(0.5000);-webkit-text-stroke:0.4px #f3f3f3;">1</span>
<span class="t" style="left:544.00px;top:979.70px;font-size:29px;transform:scaleX(0.7533);-webkit-text-stroke:0.4px #f3f3f3;">x</span>
<span class="t" style="left:563.02px;top:979.70px;font-size:29px;transform:scaleX(0.9753);-webkit-text-stroke:0.4px #f3f3f3;">deletion</span>
<span class="t" style="left:680.62px;top:979.70px;font-size:29px;transform:scaleX(0.8814);-webkit-text-stroke:0.4px #f3f3f3;">0 B</span>
</body></html>
